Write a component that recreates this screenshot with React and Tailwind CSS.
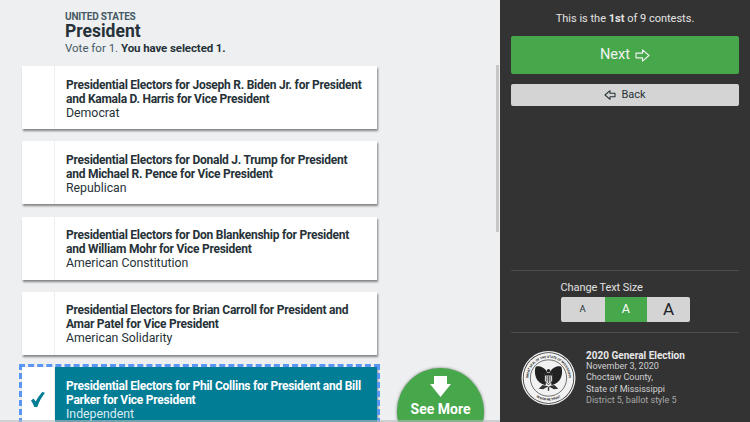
import React from 'react';

const candidates = [
  { id: 1, name: 'Presidential Electors for Joseph R. Biden Jr. for President and Kamala D. Harris for Vice President', party: 'Democrat' },
  { id: 2, name: 'Presidential Electors for Donald J. Trump for President and Michael R. Pence for Vice President', party: 'Republican' },
  { id: 3, name: 'Presidential Electors for Don Blankenship for President and William Mohr for Vice President', party: 'American Constitution' },
  { id: 4, name: 'Presidential Electors for Brian Carroll for President and Amar Patel for Vice President', party: 'American Solidarity' },
  { id: 5, name: 'Presidential Electors for Phil Collins for President and Bill Parker for Vice President', party: 'Independent', selected: true },
];

function ArrowRight({ className }) {
  return (
    <svg className={className} viewBox="0 0 16 14" fill="none" stroke="currentColor" strokeWidth="1.2" strokeLinejoin="round">
      <path d="M1 4.5h7V1l7 6-7 6V9.5H1z" />
    </svg>
  );
}

function ArrowLeft({ className }) {
  return (
    <svg className={className} viewBox="0 0 16 14" fill="none" stroke="currentColor" strokeWidth="1.5" strokeLinejoin="round">
      <path d="M15 4.5H8V1L1 7l7 6V9.5h7z" />
    </svg>
  );
}

function Seal({ className }) {
  return (
    <svg className={className} viewBox="0 0 56 56">
      <defs>
        <path id="seal-top" d="M10.250 38.250A20.500 20.500 0 1 1 45.750 38.250" />
        <path id="seal-bottom" d="M5 28a23 23 0 0 0 46 0" />
      </defs>
      <circle cx="28" cy="28" r="27.500" fill="#f2f2f2" />
      <circle cx="28" cy="28" r="26.200" fill="#333" />
      <circle cx="28" cy="28" r="25.400" fill="#f2f2f2" />
      <text fontFamily="Roboto, sans-serif" fontSize="3.200" fontWeight="700" fill="#222">
        <textPath href="#seal-top" startOffset="50%" textAnchor="middle">GREAT SEAL OF THE STATE OF MISSISSIPPI</textPath>
      </text>
      <text fontFamily="Roboto, sans-serif" fontSize="3.200" fontWeight="700" fill="#222">
        <textPath href="#seal-bottom" startOffset="50%" textAnchor="middle">IN GOD WE TRUST</textPath>
      </text>
      <circle cx="28" cy="28" r="18.500" fill="none" stroke="#333" strokeWidth="0.7" />
      {/* eagle */}
      <path d="M26.500 22c-2-4-7-7-11.500-5.500-1.500 4-1 10 2 14 2 2.500 5 4 8 5z" fill="#222" />
      <path d="M29.500 22c2-4 7-7 11.500-5.500 1.500 4 1 10-2 14-2 2.500-5 4-8 5z" fill="#222" />
      <path d="M24 23h8v8l-4 4-4-4z" fill="#ddd" stroke="#222" strokeWidth="0.7" />
      <path d="M24 23h8v2.500h-8z" fill="#222" />
      <path d="M26.300 26v5.500M28 26v7M29.700 26v5.500" stroke="#222" strokeWidth="0.7" />
      <circle cx="28" cy="20.500" r="1.700" fill="#222" />
      <path d="M22 35l-4 4 4.500.5 5.500-3 5.500 3 4.500-.5-4-4-6 1.500z" fill="#333" />
      <path d="M28 37v4" stroke="#333" strokeWidth="1.400" />
    </svg>
  );
}

function CandidateCard({ name, party, selected }) {
  return (
    <div className={`relative flex h-[63px] w-[355px] shrink-0 bg-white shadow-[1px_2px_2px_rgba(0,0,0,0.45)] ${selected ? 'outline-[3px] outline-dashed outline-[#5a97f5]' : ''}`}>
      <div className="flex w-[33px] shrink-0 items-center justify-center border-r border-[#eeeeee]">
        {selected && (
          <svg className="mt-[1px] h-[15px] w-[14px] text-[#027d96]" viewBox="0 0 14 15" fill="currentColor">
            <path d="M0 8.500l2.600-1.900 2 2.900C6.500 6 8.800 2.800 11.200 0L14 .8C10.800 4.800 8.200 9.500 6.300 15H3.300C2.600 12.800 1.500 10.500 0 8.500z" />
          </svg>
        )}
      </div>
      <div className={`flex-1 pl-[11px] pr-[12px] pt-[11.500px] text-[12.300px] leading-[14px] ${selected ? 'bg-[#027d96] text-white' : 'text-[#263238]'}`}>
        <div className="text-[12px] font-bold tracking-[-0.25px]">{name}</div>
        <div className={selected ? 'text-[#dcecf0]' : ''}>{party}</div>
      </div>
    </div>
  );
}

export default function App() {
  return (
    <div className="flex h-[422px] w-[750px] overflow-hidden bg-[#333333] font-['Roboto',sans-serif]">
      {/* Contest column */}
      <div className="relative h-full w-[500px] shrink-0 overflow-hidden bg-[#edeff1]">
        <div className="pl-[65px] pt-[11px] text-[#263238]">
          <div className="text-[10px] font-bold leading-[12px] tracking-[-0.2px] text-[#455a64]">UNITED STATES</div>
          <h1 className="text-[17.500px] font-bold leading-[16px]">President</h1>
          <p className="mt-[2px] text-[11.500px] leading-[14px] text-[#455a64]">
            Vote for 1. <span className="font-bold tracking-[-0.1px] text-[#263238]">You have selected 1.</span>
          </p>
        </div>
        <div className="ml-[22px] mt-[11px] flex flex-col gap-[12.250px]">
          {candidates.map((c) => (
            <CandidateCard key={c.id} name={c.name} party={c.party} selected={c.selected} />
          ))}
        </div>

        {/* See more */}
        <div className="absolute left-[397px] top-[368px] flex h-[87px] w-[87px] flex-col items-center rounded-full bg-[#47a74b] pt-[8px] text-white shadow-[0_0_3px_rgba(0,0,0,0.5)]">
          <svg className="h-[21px] w-[21px]" viewBox="0 0 21 21" fill="currentColor">
            <path d="M4 0h13v8h4L10.500 21 0 8h4z" />
          </svg>
          <span className="mt-[2.500px] text-[14px] font-bold leading-[18px]">See More</span>
        </div>

        {/* Scrollbar */}
        <div className="absolute left-[496px] top-[65px] h-[167px] w-[3px] bg-[#c4c6c7]" />
        <div className="absolute bottom-0 left-0 h-[2px] w-full bg-[#b8bcbf]/60" />
      </div>

      {/* Sidebar */}
      <div className="flex h-full w-[250px] shrink-0 flex-col px-[11px] text-white">
        <p className="pt-[11px] text-center text-[11px] leading-[15px] text-[#e4e4e4]">
          This is the <span className="font-bold">1st</span> of 9 contests.
        </p>
        <button className="mt-[10px] flex h-[38px] items-center justify-center gap-[5px] rounded-[2px] bg-[#47a74b] text-[14.500px] text-[#f2f2f2]">
          Next <ArrowRight className="h-[13px] w-[15px]" />
        </button>
        <button className="mt-[10px] flex h-[22px] items-center justify-center gap-[5px] rounded-[2px] bg-[#d4d4d4] text-[11px] text-[#263238]">
          <ArrowLeft className="h-[10px] w-[12px]" /> Back
        </button>

        <div className="mt-auto border-t border-[#4d4d4d] pb-[10px] pt-[9px]">
          <div className="ml-[49.500px] w-[129.500px]">
            <div className="text-[11px] leading-[16px] tracking-[-0.1px] text-[#e0e0e0]">Change Text Size</div>
            <div className="mt-[1px] flex h-[25px] overflow-hidden rounded-[2px] bg-[#d4d4d4] text-[#263238]">
              <div className="flex w-[44px] items-center justify-center text-[9.500px]">A</div>
              <div className="flex w-[42.500px] items-center justify-center bg-[#47a74b] text-[12.500px] text-white">A</div>
              <div className="flex w-[43px] items-center justify-center text-[17px] text-[#1c2226]">A</div>
            </div>
          </div>
        </div>
        <div className="flex h-[90px] items-start gap-[10px] border-t border-[#4d4d4d] pl-[10px] pt-[17px]">
          <Seal className="h-[56px] w-[55px] shrink-0" />
          <div className="text-[9px] leading-[11.200px] text-[#d0d0d0]">
            <div className="text-[10px] font-bold text-[#e8e8e8]">2020 General Election</div>
            <div>November 3, 2020</div>
            <div>Choctaw County,</div>
            <div>State of Mississippi</div>
            <div className="text-[#a8a8a8]">District 5, ballot style 5</div>
          </div>
        </div>
      </div>
    </div>
  );
}
